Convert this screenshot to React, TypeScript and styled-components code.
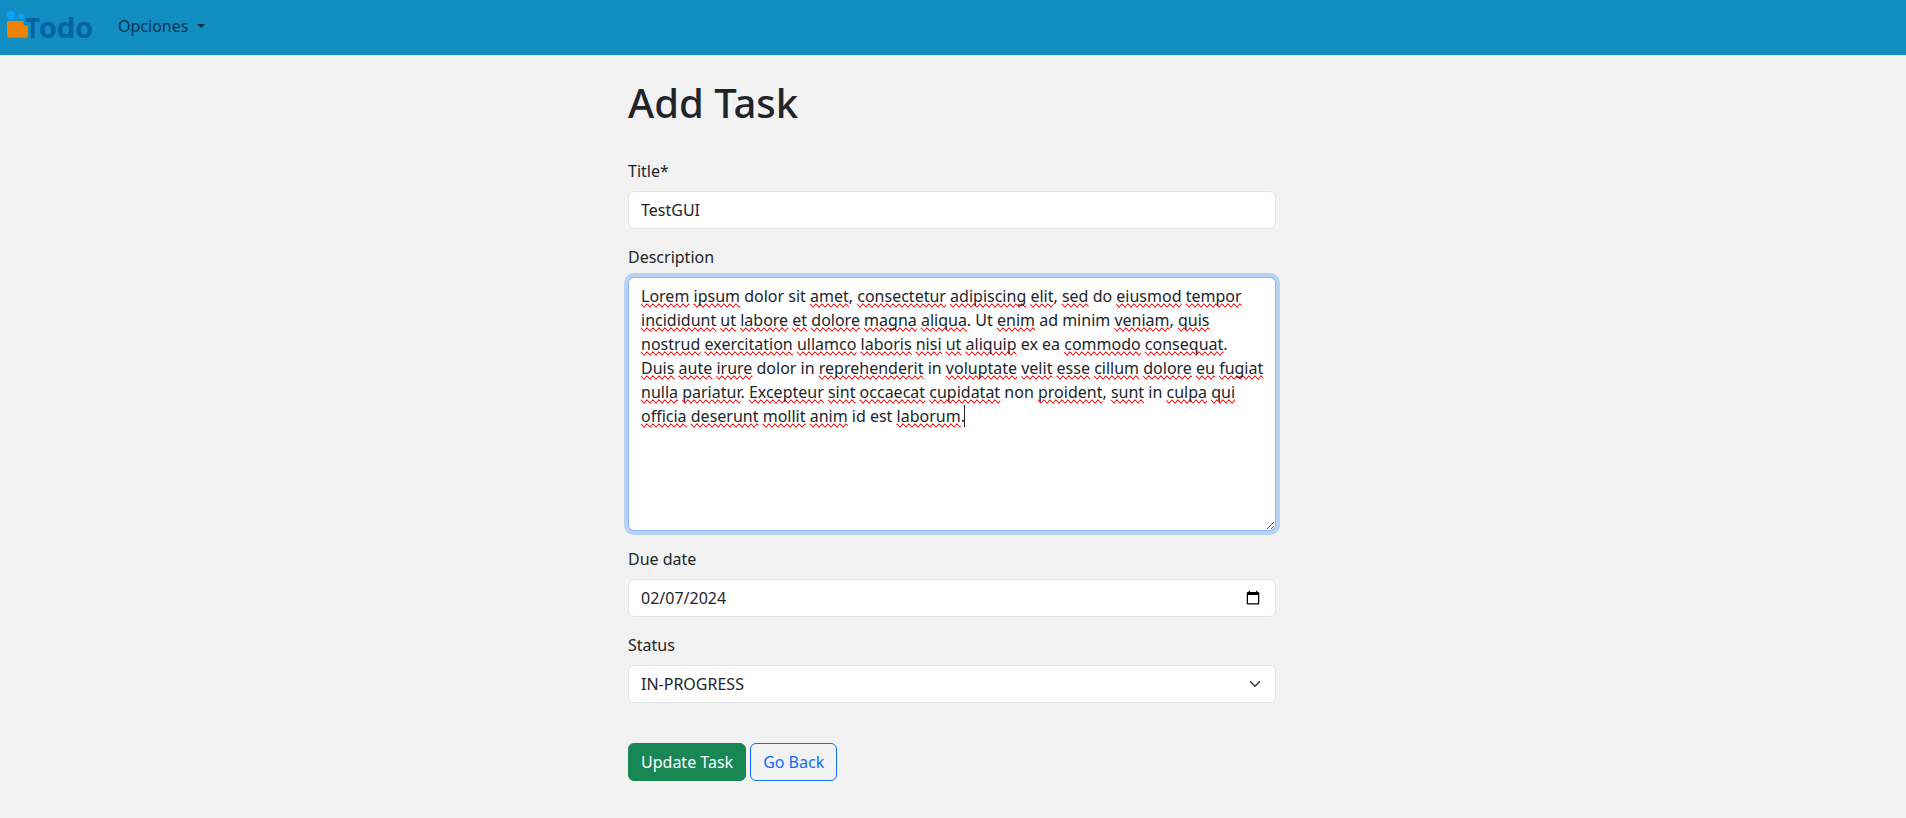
import React from "react";
import styled, { createGlobalStyle, css } from "styled-components";

const GlobalStyle = createGlobalStyle`
  *, *::before, *::after { box-sizing: border-box; }
  body {
    margin: 0;
    background: #f2f2f2;
    color: #212529;
    font-family: "Noto Sans", "Liberation Sans", sans-serif;
    font-size: 16px;
    line-height: 1.5;
  }
`;

const Navbar = styled.nav`
  display: flex;
  align-items: center;
  height: 55px;
  padding: 0 6px 3px;
  background: #128dc1;
`;

const Brand = styled.a`
  display: flex;
  width: 88px;
  height: 40px;
  margin-right: 24px;
`;

const NavDropdown = styled.a`
  display: flex;
  align-items: center;
  gap: 9px;
  color: rgba(0, 0, 0, 0.65);
  text-decoration: none;

  &::after {
    content: "";
    border-top: 4.8px solid;
    border-left: 4.8px solid transparent;
    border-right: 4.8px solid transparent;
  }
`;

const Form = styled.form`
  width: 648px;
  margin: 24px 0 0 628px;
`;

const Heading = styled.h1`
  margin: 0 0 32px;
  font-size: 40px;
  font-weight: 500;
  line-height: 48px;
`;

const Field = styled.div`
  margin-bottom: 16px;
`;

const Label = styled.label`
  display: block;
  margin-bottom: 8px;
`;

const control = css`
  display: block;
  width: 100%;
  margin: 0;
  padding: 6px 12px;
  border: 1px solid #dee2e6;
  border-radius: 6px;
  background: #fff;
  color: #212529;
  font: inherit;
  appearance: none;
  outline: 0;
`;

const Input = styled.input`
  ${control}
  height: 38px;

  &::-webkit-date-and-time-value { min-height: 1.5em; }
  &::-webkit-datetime-edit { display: block; padding: 0; }
  &::-webkit-datetime-edit-fields-wrapper { padding: 0; }
  &::-webkit-datetime-edit-text { padding: 0; }
  &::-webkit-datetime-edit-month-field { padding: 0; }
  &::-webkit-datetime-edit-day-field { padding: 0; }
  &::-webkit-datetime-edit-year-field { padding: 0; }
`;

const Editor = styled.div`
  ${control}
  height: 254px;
  padding-right: 11px;
  overflow: auto;
  resize: vertical;
  border-color: #86b7fe;
  box-shadow: 0 0 0 4px rgba(13, 110, 253, 0.25);
`;

/* Nested once more inside itself to give the squiggle a heavier stroke. */
const Squiggle = styled.span`
  text-decoration-line: spelling-error;
`;

const Caret = styled.span`
  display: inline-block;
  width: 1px;
  height: 22px;
  margin-left: -1px;
  vertical-align: -5px;
  background: #212529;
`;

const SelectWrap = styled.div`
  display: grid;
  align-items: center;

  > * { grid-area: 1 / 1; }
`;

const Select = styled.select`
  ${control}
  height: 38px;
  padding-right: 36px;
`;

const Chevron = styled.svg`
  justify-self: end;
  margin-right: 13px;
  width: 16px;
  height: 12px;
  pointer-events: none;
`;

const Actions = styled.div`
  display: flex;
  gap: 4px;
  margin-top: 40px;
`;

const Button = styled.button<{ $outline?: boolean }>`
  height: 38px;
  padding: 6px 12px;
  border: 1px solid ${(p) => (p.$outline ? "#0d6efd" : "#198754")};
  border-radius: 6px;
  background: ${(p) => (p.$outline ? "transparent" : "#198754")};
  color: ${(p) => (p.$outline ? "#0d6efd" : "#fff")};
  font: inherit;
`;

const DESCRIPTION =
  "Lorem ipsum dolor sit amet, consectetur adipiscing elit, sed do eiusmod tempor incididunt ut labore et dolore magna aliqua. Ut enim ad minim veniam, quis nostrud exercitation ullamco laboris nisi ut aliquip ex ea commodo consequat. Duis aute irure dolor in reprehenderit in voluptate velit esse cillum dolore eu fugiat nulla pariatur. Excepteur sint occaecat cupidatat non proident, sunt in culpa qui officia deserunt mollit anim id est laborum.";

const KNOWN_WORDS = new Set([
  "dolor", "sit", "do", "Ut", "ad", "minim", "ex", "ea", "in", "non", "id", "est",
]);

function SpellChecked({ text }: { text: string }) {
  return (
    <>
      {text.split(/([A-Za-z]+)/).map((part, i) =>
        /^[A-Za-z]/.test(part) && !KNOWN_WORDS.has(part) ? (
          <Squiggle key={i}>
            <Squiggle>{part}</Squiggle>
          </Squiggle>
        ) : (
          part
        )
      )}
    </>
  );
}

function Logo() {
  return (
    <svg width="88" height="40" viewBox="0 0 88 40">
      <circle cx="5" cy="9.3" r="4.2" fill="#0aa0fb" />
      <circle cx="15.4" cy="10.2" r="3" fill="#0aa0fb" />
      <path
        d="M1 15H17.6V19.6H22V28.4A3.4 3.4 0 0 1 18.6 31.8H4.2A3.2 3.2 0 0 1 1 28.6Z"
        fill="#ee8200"
      />
      <text y="31.7" fontFamily="Inter, sans-serif" fill="#0462a6">
        <tspan x="19.2" fontSize="26.5" fontWeight="800" textLength="15" lengthAdjust="spacingAndGlyphs">
          T
        </tspan>
        <tspan x="33" fontSize="29" fontWeight="700" textLength="54" lengthAdjust="spacingAndGlyphs">
          odo
        </tspan>
      </text>
    </svg>
  );
}

export default function App() {
  return (
    <>
      <GlobalStyle />
      <Navbar>
        <Brand>
          <Logo />
        </Brand>
        <NavDropdown>Opciones</NavDropdown>
      </Navbar>
      <Form>
        <Heading>Add Task</Heading>
        <Field>
          <Label>Title*</Label>
          <Input type="text" defaultValue="TestGUI" />
        </Field>
        <Field>
          <Label>Description</Label>
          <Editor role="textbox" aria-multiline="true">
            <SpellChecked text={DESCRIPTION} />
            <Caret />
          </Editor>
        </Field>
        <Field>
          <Label>Due date</Label>
          <Input type="date" defaultValue="2024-02-07" />
        </Field>
        <Field>
          <Label>Status</Label>
          <SelectWrap>
            <Select defaultValue="IN-PROGRESS">
              <option>IN-PROGRESS</option>
            </Select>
            <Chevron viewBox="0 0 16 16">
              <path
                d="m2 5 6 6 6-6"
                fill="none"
                stroke="#343a40"
                strokeWidth="2"
                strokeLinecap="round"
                strokeLinejoin="round"
              />
            </Chevron>
          </SelectWrap>
        </Field>
        <Actions>
          <Button type="button">Update Task</Button>
          <Button type="button" $outline>
            Go Back
          </Button>
        </Actions>
      </Form>
    </>
  );
}
